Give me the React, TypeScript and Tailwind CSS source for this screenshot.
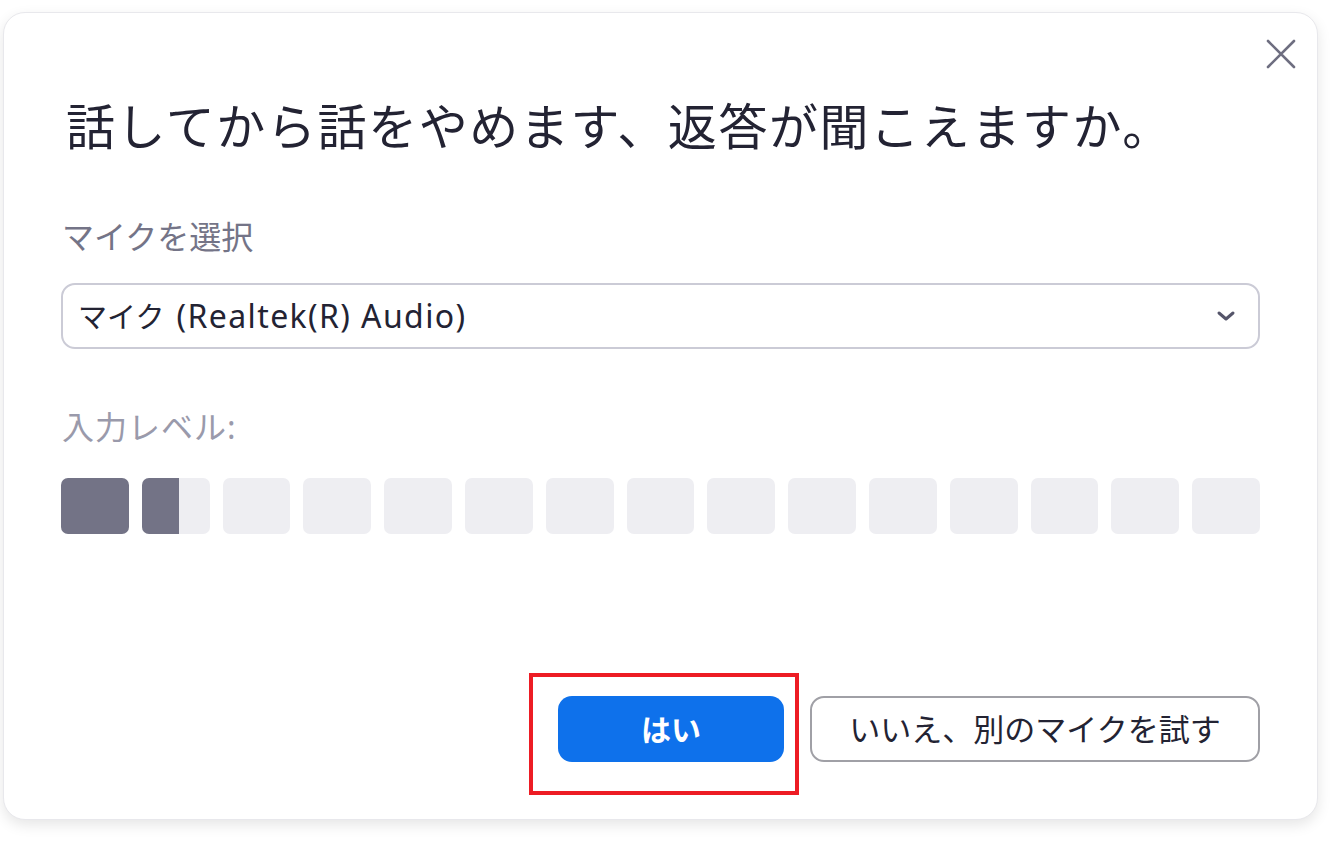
import React from "react";

const levels = [1, 0.55, 0, 0, 0, 0, 0, 0, 0, 0, 0, 0, 0, 0, 0];

const font = { fontFamily: '"Noto Sans", "Noto Sans CJK JP", sans-serif' };

function LevelBar({ fill }: { fill: number }) {
    return (
        <div className="relative h-[56px] flex-1 overflow-hidden rounded-[7px] bg-[#eeeef2]">
            <div className="h-full bg-[#737386]" style={{ width: `${fill * 100}%` }} />
        </div>
    );
}

export default function App() {
    return (
        <div className="min-h-[859px] w-[1344px] bg-white pl-[3px] pt-[12px]" style={font}>
            <div className="relative flex h-[808px] w-[1315px] flex-col rounded-[22px] border border-[#e8e8ec] bg-white px-[57px] pt-[89px] shadow-[0_5px_14px_rgba(0,0,0,0.1)]">
                {/* close */}
                <button className="absolute right-[20px] top-[25px] p-0">
                    <svg width="32" height="32" viewBox="0 0 32 32">
                        <path d="M3 3 L29 29 M29 3 L3 29" stroke="#6e6e80" strokeWidth="2.6" strokeLinecap="round" />
                    </svg>
                </button>

                <h1 className="ml-[5px] text-[49px] font-normal leading-[49px] tracking-[1.6px] text-[#232333]">
                    話してから話をやめます、返答が聞こえますか。
                </h1>

                <div className="ml-[1px] mt-[70px] text-[32px] leading-[32px] text-[#747487]">マイクを選択</div>

                <div className="mt-[30px] flex h-[66px] items-center justify-between rounded-[14px] border-2 border-[#cbcbd6] pl-[15px] pr-[22px]">
                    <span className="text-[#232333]">
                        <span className="text-[29px]">マイク</span>
                        <span className="ml-[12px] text-[32px] tracking-[1.4px]">(Realtek(R) Audio)</span>
                    </span>
                    <svg width="20" height="12" viewBox="0 0 20 12">
                        <path d="M3 3 L10 9 L17 3" fill="none" stroke="#55556a" strokeWidth="3" strokeLinecap="round" strokeLinejoin="round" />
                    </svg>
                </div>

                <div className="ml-[1px] mt-[62px] text-[32px] leading-[32px] tracking-[1px] text-[#9a9aab]">入力レベル:</div>

                <div className="mt-[35px] flex gap-[13px]">
                    {levels.map((l, i) => (
                        <LevelBar key={i} fill={l} />
                    ))}
                </div>

                <div className="mt-auto mb-[57px] flex justify-end gap-[26px]">
                    <div className="relative">
                        <button className="h-[66px] w-[226px] rounded-[14px] bg-[#0e71eb] text-[30px] font-bold text-white">
                            はい
                        </button>
                        {/* highlight box */}
                        <div className="pointer-events-none absolute left-[-29px] top-[-23px] h-[122px] w-[270px] border-4 border-[#ed1c24]" />
                    </div>
                    <button className="h-[66px] w-[450px] rounded-[14px] border-2 border-[#a0a0a6] bg-white text-[31px] text-[#232333]">
                        いいえ、別のマイクを試す
                    </button>
                </div>
            </div>
        </div>
    );
}
